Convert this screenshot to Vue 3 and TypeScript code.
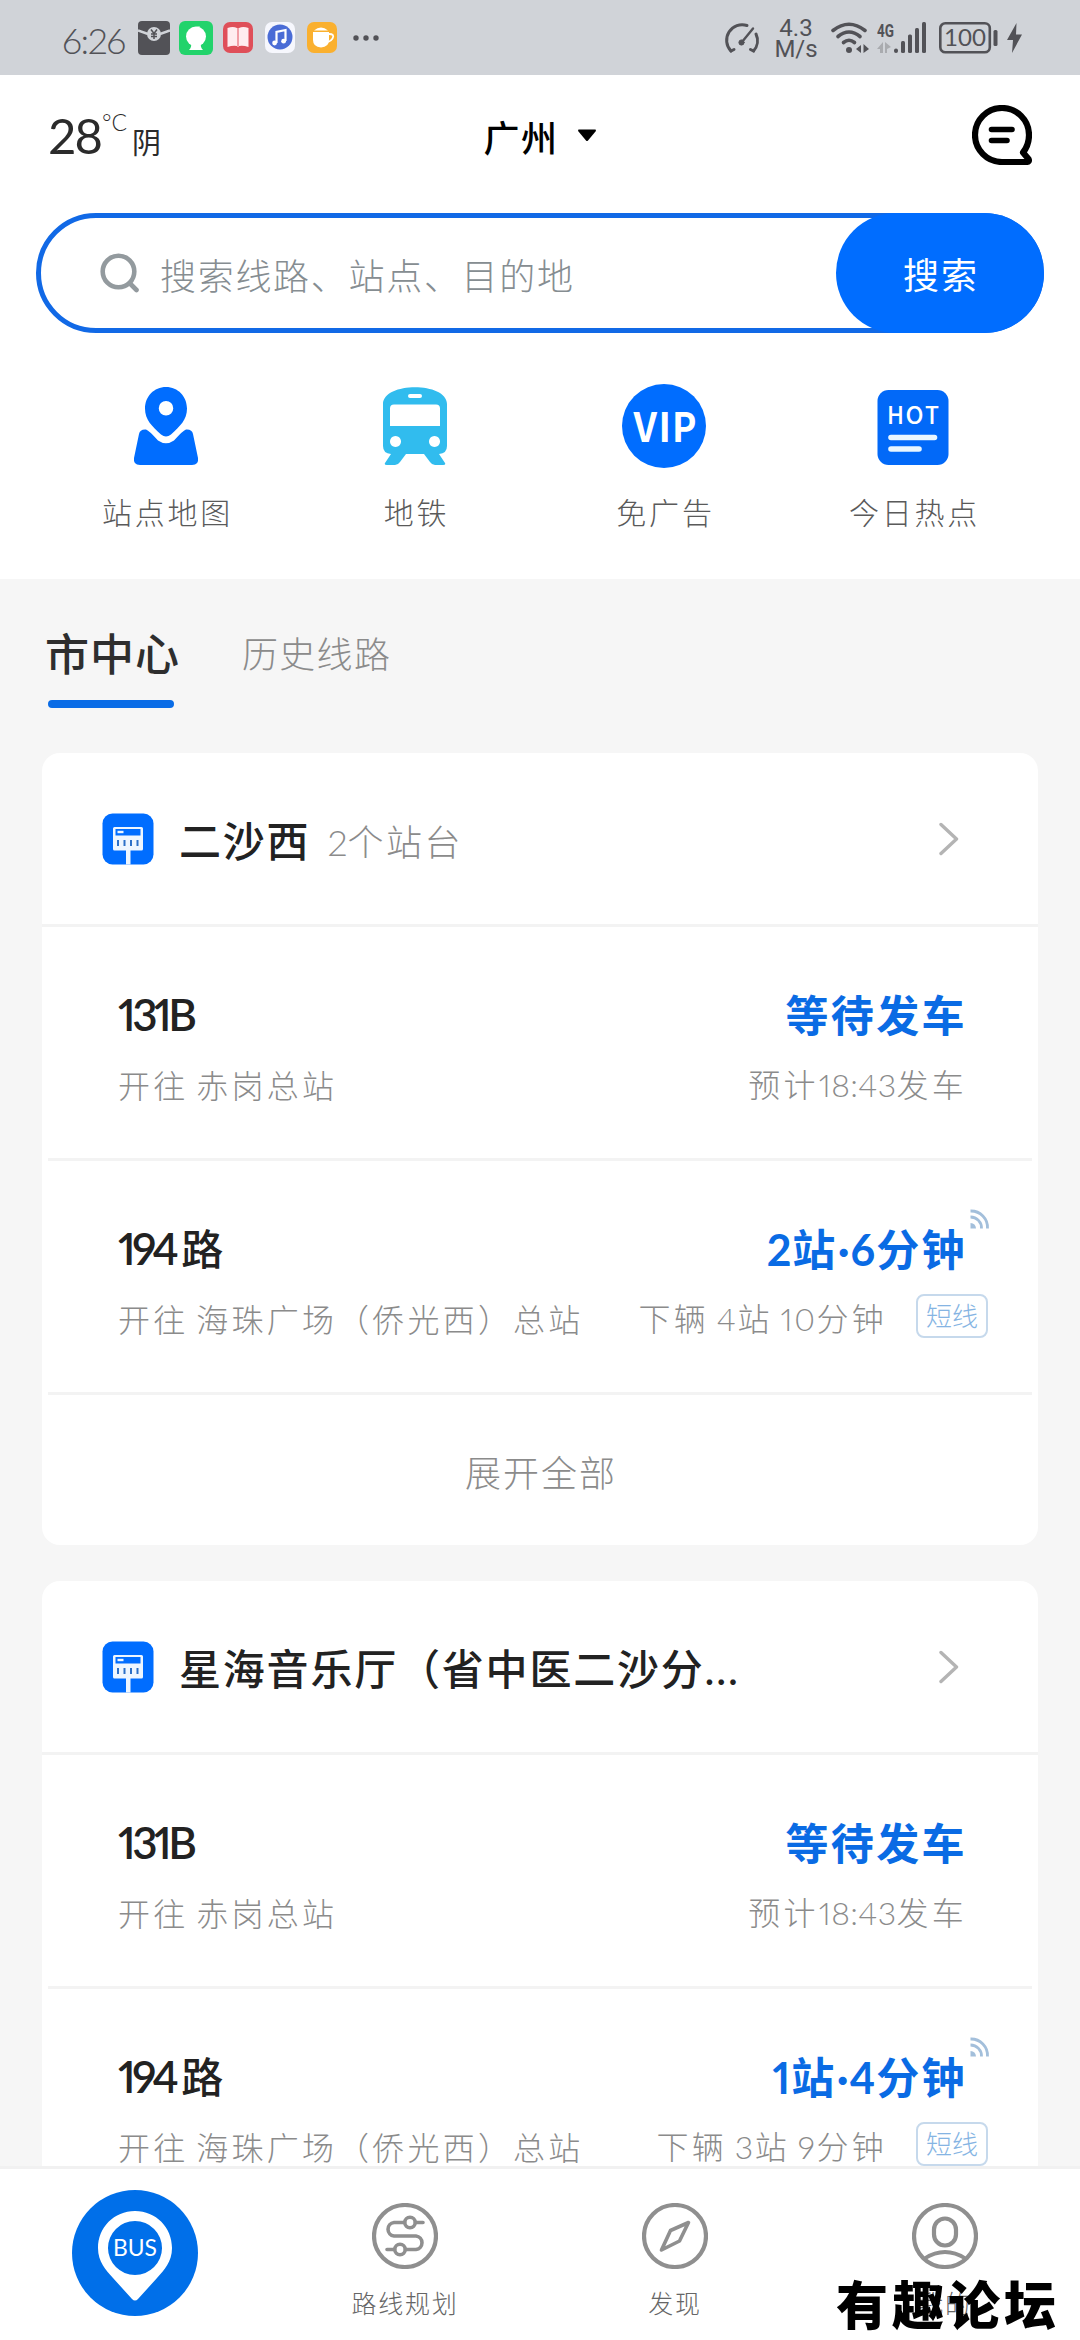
<script setup lang="ts">
import { h, type FunctionalComponent } from 'vue'

interface Line {
  name: string
  dest: string
  eta: string
  note: string
  live: boolean
  tag?: string
}

interface Stop {
  title: string
  count?: string
  lines: Line[]
}

// Splits a label so that latin digits can be spaced more tightly than hanzi.
const Mixed: FunctionalComponent<{ text: string }> = (props) =>
  h(
    'span',
    { class: 'mixed' },
    props.text
      .split(/([0-9A-Z:·.]+)/)
      .filter((part) => part.length > 0)
      .map((part) => (/^[0-9A-Z:·.]/.test(part) ? h('span', { class: 'num' }, part) : part)),
  )
Mixed.props = ['text']

const stops: Stop[] = [
  {
    title: '二沙西',
    count: '2个站台',
    lines: [
      { name: '131B', dest: '开往 赤岗总站', eta: '等待发车', note: '预计18:43发车', live: false },
      { name: '194路', dest: '开往 海珠广场（侨光西）总站', eta: '2站·6分钟', note: '下辆 4站 10分钟', live: true, tag: '短线' },
    ],
  },
  {
    title: '星海音乐厅（省中医二沙分...',
    lines: [
      { name: '131B', dest: '开往 赤岗总站', eta: '等待发车', note: '预计18:43发车', live: false },
      { name: '194路', dest: '开往 海珠广场（侨光西）总站', eta: '1站·4分钟', note: '下辆 3站 9分钟', live: true, tag: '短线' },
    ],
  },
]
</script>

<template>
  <div class="screen">
    <div class="status">
      <div class="time">6:26</div>
      <svg class="s1" width="32" height="34" viewBox="0 0 32 34">
        <rect width="32" height="34" rx="4" fill="#525257" />
        <path d="M0 9.500 L10 13 M32 9.500 L22 13" stroke="#d0d3d8" stroke-width="2.400" fill="none" />
        <circle cx="16" cy="13" r="7" fill="#d0d3d8" />
        <path d="M13 8.500 L16 12.500 L19 8.500 M16 12.500 V18 M13 13 H19 M13 15.500 H19" stroke="#525257" stroke-width="1.500" fill="none" />
      </svg>
      <svg class="s2" width="34" height="34" viewBox="0 0 34 34">
        <rect width="34" height="34" rx="6" fill="#22d36b" />
        <circle cx="17" cy="15.500" r="10" fill="#fff" />
        <path d="M15 8 Q16 5 21 5.500 L18 9 Z M12 22 H22 Q21 26 24 29 H10 Q13 26 12 22 Z" fill="#fff" />
      </svg>
      <svg class="s3" width="30" height="31" viewBox="0 0 30 31">
        <rect width="30" height="31" rx="7" fill="#df4f59" />
        <path d="M4.500 6 Q10 4 14 6 V24 Q10 23 4.500 25 Z" fill="#ffecef" />
        <path d="M25.500 6 Q20 4 16 6 V24 Q20 23 25.500 25 Z" fill="#ffecef" />
        <path d="M15 6 V25" stroke="#f7b9c0" stroke-width="1.500" />
      </svg>
      <svg class="s3" width="30" height="31" viewBox="0 0 30 31">
        <rect width="30" height="31" rx="7" fill="#f6f7fd" />
        <circle cx="15" cy="15" r="12.500" fill="#4a6cd6" />
        <path d="M11.500 21 V10 L20.500 8 V19" stroke="#fff" stroke-width="2.200" fill="none" />
        <circle cx="9.600" cy="21" r="2.400" fill="#fff" />
        <circle cx="18.600" cy="19.200" r="2.400" fill="#fff" />
      </svg>
      <svg class="s5" width="30" height="31" viewBox="0 0 30 31">
        <rect width="30" height="31" rx="7" fill="#fab02f" />
        <path d="M6 10 H22 V18 Q22 25 14 25.500 Q6 25 6 18 Z" fill="#fff" />
        <path d="M7 8.500 Q14 2.500 21 8.500 Z" fill="#fff" />
        <path d="M22 12 Q28 12 25.500 16.500 Q24 19 21 20" stroke="#fff" stroke-width="1.800" fill="none" />
      </svg>
      <svg width="26" height="6" viewBox="0 0 26 6" fill="#525257">
        <circle cx="3" cy="3" r="2.700" /><circle cx="13" cy="3" r="2.700" /><circle cx="23" cy="3" r="2.700" />
      </svg>
      <div class="grow"></div>
      <svg class="gauge" width="36" height="32" viewBox="0 0 36 32" fill="none" stroke="#525257" stroke-width="3" stroke-linecap="round">
        <path d="M7 29 A15.500 15.500 0 0 1 23 3.500" />
        <path d="M32 12 A15.500 15.500 0 0 1 29.500 29" />
        <path d="M7 29 L10 27.500 M29.500 29 L26.500 27.500" />
        <path d="M18 20 L29 6.500" stroke-width="2.400" />
        <circle cx="17.500" cy="20.500" r="2.600" fill="#525257" stroke-width="1" />
      </svg>
      <div class="speed"><span>4.3</span><span>M/s</span></div>
      <svg class="wifi" width="38" height="32" viewBox="0 0 38 32" fill="none" stroke="#525257" stroke-width="3.600" stroke-linecap="round">
        <path d="M2 8.500 Q18 -4 34 8.500" />
        <path d="M7 14.500 Q18 5.500 29 14.500" />
        <path d="M12.500 20.500 Q18 16 23.500 20.500" />
        <circle cx="18" cy="28" r="3" fill="#525257" stroke="none" />
        <path d="M30 23 V31 L25 27 Z M32.500 31 V22 L38 27 Z" fill="#525257" stroke="none" />
      </svg>
      <svg class="signal" width="51" height="32" viewBox="0 0 51 32" fill="#525257">
        <text x="0" y="15" font-size="19" font-weight="700" textLength="17" lengthAdjust="spacingAndGlyphs" font-family="Roboto, sans-serif">4G</text>
        <path d="M6 31 V20 L0 27 H3 V31 Z M8 20 V31 H10 V27 L14 25 Z" fill="#a9abaf" />
        <rect x="17" y="26.500" width="4" height="4.500" rx="2" />
        <rect x="24" y="19" width="4" height="12" rx="1.500" />
        <rect x="31" y="12.500" width="4" height="18.500" rx="1.500" />
        <rect x="38" y="6" width="4" height="25" rx="1.500" />
        <rect x="45" y="0" width="4" height="31" rx="1.500" />
      </svg>
      <svg class="battery" width="60" height="32" viewBox="0 0 60 32">
        <rect x="1.300" y="1.300" width="49.500" height="29" rx="5" fill="none" stroke="#525257" stroke-width="2.600" />
        <rect x="54.500" y="8" width="4" height="16" rx="1.500" fill="#525257" />
        <text x="5" y="24" font-size="23" font-weight="400" textLength="42" lengthAdjust="spacingAndGlyphs" fill="#525257" font-family="Lato, sans-serif">100</text>
      </svg>
      <svg width="15" height="30" viewBox="0 0 15 30"><path d="M9.500 0 L0 17 H6 L5 30 L15 11.500 H9 Z" fill="#525257" /></svg>
    </div>

    <div class="top">
      <header class="header">
        <div class="weather"><span class="deg">28</span><span class="unit">°C</span><span class="sky">阴</span></div>
        <div class="city">
          <span>广州</span>
          <svg width="20" height="13" viewBox="0 0 20 13"><path d="M1.500 0.500 H18.500 Q19.500 1 18.500 2.500 L11 11.500 Q10 12.500 9 11.500 L1.500 2.500 Q0.500 1 1.500 0.500 Z" fill="#000" /></svg>
        </div>
        <svg class="msg" width="60" height="60" viewBox="0 0 60 60" fill="none" stroke="#000" stroke-width="6.200" stroke-linecap="round" stroke-linejoin="round">
          <path d="M30 57 A27 27 0 1 1 57 30 Q57 40 51 47.500 L56.500 54 Q58 57 54 57 Z" />
          <path d="M19.500 24.500 H40 M19.500 35.500 H35" stroke-width="5.600" />
        </svg>
      </header>

      <div class="search">
        <svg width="40" height="40" viewBox="0 0 40 40" fill="none" stroke="#939a9e" stroke-width="4.600" stroke-linecap="round">
          <circle cx="18.500" cy="18.500" r="15.800" /><path d="M30 30.500 L36.500 37" />
        </svg>
        <span class="hint">搜索线路、站点、目的地</span>
        <div class="go">搜索</div>
      </div>

      <div class="shortcuts">
        <div class="cut">
          <svg width="84" height="84" viewBox="0 0 84 84" fill="#006dff">
            <path fill-rule="evenodd" d="M42 3 C54 3 63 12.500 63 24.500 C63 36 56 42 47 50.500 Q42 54.500 37 50.500 C28 42 21 36 21 24.500 C21 12.500 30 3 42 3 Z M42 17 A7.200 7.200 0 1 0 42 31.500 A7.200 7.200 0 1 0 42 17 Z" />
            <path d="M22 45.500 Q24.500 46 34 56.500 Q42 62 50 56.500 Q59.500 46 62 45.500 Q68 45 69 50 L74 74 Q75 81 68 81 H16 Q9 81 10 74 L15 50 Q16 45 22 45.500 Z" />
          </svg>
          <span>站点地图</span>
        </div>
        <div class="cut">
          <svg width="84" height="84" viewBox="0 0 84 84" fill="#31bcee">
            <path fill-rule="evenodd" d="M10 20 C10 -2.500 74 -2.500 74 20 V62 Q74 69.500 66 70 L72 79 Q73 81 70 81 H62 Q59 81 57 78 L51 70 H33 L27 78 Q25 81 22 81 H14 Q11 81 12 79 L18 70 Q10 69.500 10 62 Z M37 10 a2 2 0 0 0 0 4 H47 a2 2 0 0 0 0 -4 Z M21 20.500 Q17 20.500 17 24.500 V42 H67 V24.500 Q67 20.500 63 20.500 Z M22.500 52 a5.500 5.500 0 1 0 0.010 0 Z M61.500 52 a5.500 5.500 0 1 0 0.010 0 Z" />
          </svg>
          <span>地铁</span>
        </div>
        <div class="cut">
          <svg width="84" height="84" viewBox="0 0 84 84">
            <circle cx="42" cy="42" r="42" fill="#006dff" />
            <g fill="#fff" font-size="41" font-weight="700" letter-spacing="0" font-family="'Noto Sans CJK SC', sans-serif">
              <text x="11.500" y="57.500" textLength="23.500" lengthAdjust="spacingAndGlyphs">V</text>
              <text x="36.500" y="57.500" textLength="12.500" lengthAdjust="spacingAndGlyphs">I</text>
              <text x="50" y="57.500" textLength="24.500" lengthAdjust="spacingAndGlyphs">P</text>
            </g>
          </svg>
          <span>免广告</span>
        </div>
        <div class="cut">
          <svg width="84" height="84" viewBox="0 0 84 84">
            <rect x="6.500" y="6" width="71" height="75" rx="11" fill="#0269f8" />
            <g fill="#fff" font-size="24" font-weight="500" letter-spacing="0" font-family="'Noto Sans CJK SC', sans-serif">
              <text x="16" y="40" textLength="17" lengthAdjust="spacingAndGlyphs">H</text>
              <text x="34.500" y="40" textLength="18" lengthAdjust="spacingAndGlyphs">O</text>
              <text x="54" y="40" textLength="14" lengthAdjust="spacingAndGlyphs">T</text>
            </g>
            <path d="M20 53.500 H63.500 M20 65 H48" stroke="#e9f6ff" stroke-width="5.600" stroke-linecap="round" />
          </svg>
          <span>今日热点</span>
        </div>
      </div>
    </div>

    <main class="content">
      <div class="tabs">
        <div class="tab active">市中心</div>
        <div class="tab">历史线路</div>
      </div>

      <section v-for="stop in stops" :key="stop.title" class="card">
        <div class="card-head">
          <svg class="stop-icon" width="52" height="52" viewBox="0 0 52 52">
            <rect x="0.500" y="0.500" width="51" height="51" rx="10" fill="#006dff" />
            <path fill-rule="evenodd" d="M12.500 14 H39.500 Q41 14 41 15.500 V36 Q41 37.500 39.500 37.500 H28.500 V51.500 H24 V37.500 H12.500 Q11 37.500 11 36 V15.500 Q11 14 12.500 14 Z M13.500 16 V22.500 H38.500 V16 Z" fill="#eef6ff" />
            <path d="M15.500 19 H21.500" stroke="#eef6ff" stroke-width="2.400" />
            <path d="M16 27 V33 M22.500 27 V33 M29 27 V33 M35.500 27 V33" stroke="#2d70c8" stroke-width="2" />
          </svg>
          <h2>{{ stop.title }}</h2>
          <Mixed v-if="stop.count" class="count" :text="stop.count" />
          <svg class="chevron" width="20" height="34" viewBox="0 0 20 34"><path d="M2 2.500 L17.500 17 L2 31.500" fill="none" stroke="#b4b4b4" stroke-width="3.400" stroke-linecap="round" stroke-linejoin="round" /></svg>
        </div>

        <div v-for="line in stop.lines" :key="line.name" class="row">
          <div class="left">
            <Mixed class="name" :text="line.name" />
            <Mixed class="sub" :text="line.dest" />
          </div>
          <div class="right">
            <div class="eta">
              <Mixed :text="line.eta" />
              <svg v-if="line.live" class="live" width="20" height="20" viewBox="0 0 20 20" fill="none" stroke="#a3bfdb" stroke-width="2.800">
                <path d="M0.500 2 A16.500 16.500 0 0 1 17.500 19.500 M0.500 8 A11 11 0 0 1 11.500 19.500" />
                <path d="M0.500 14 A6 6 0 0 1 6 19.500 H0.500 Z" fill="#a3bfdb" stroke="none" />
              </svg>
            </div>
            <div class="note" :class="{ tagged: line.tag }">
              <Mixed class="sub" :text="line.note" />
              <span v-if="line.tag" class="tag">{{ line.tag }}</span>
            </div>
          </div>
        </div>

        <div class="more">展开全部</div>
      </section>
    </main>

    <nav class="nav">
      <div class="item home">
        <svg width="126" height="126" viewBox="0 0 126 126">
          <circle cx="63" cy="63" r="63" fill="#006fe9" />
          <path fill-rule="evenodd" d="M63 21 C84 21 100 37.500 100 58 C100 72 92 80 85 88 L66 109 Q63 112 60 109 L41 88 C34 80 26 72 26 58 C26 37.500 42 21 63 21 Z M63 31 A27 27 0 1 0 63 85 A27 27 0 1 0 63 31 Z" fill="#fff" />
          <text x="41" y="66" font-size="23.500" font-weight="400" letter-spacing="0" textLength="44" lengthAdjust="spacingAndGlyphs" fill="#fff" font-family="Lato, sans-serif">BUS</text>
        </svg>
      </div>
      <div class="item">
        <svg width="66" height="66" viewBox="0 0 66 66" fill="none" stroke="#8f8f8f" stroke-width="3.600" stroke-linecap="round">
          <circle cx="33" cy="33" r="31" stroke-width="4.200" />
          <path d="M51 19.500 H43.500 M32.500 19.500 H22 A6.800 6.800 0 0 0 22 33 H44 A6.800 6.800 0 0 1 44 46.500 H33.500 M22.500 46.500 H15" />
          <circle cx="38" cy="19.500" r="5.200" /><circle cx="28" cy="46.500" r="5.200" />
        </svg>
        <span>路线规划</span>
      </div>
      <div class="item">
        <svg width="66" height="66" viewBox="0 0 66 66" fill="none" stroke="#8f8f8f" stroke-width="3.600" stroke-linejoin="round">
          <circle cx="33" cy="33" r="31" stroke-width="4.200" />
          <path d="M46.500 19.500 L28.500 27.500 L19.500 47 L37.500 38 Z" />
        </svg>
        <span>发现</span>
      </div>
      <div class="item">
        <svg width="66" height="66" viewBox="0 0 66 66" fill="none" stroke="#8f8f8f" stroke-width="4.200">
          <circle cx="33" cy="33" r="31" />
          <rect x="22" y="15.500" width="22" height="27" rx="11" />
          <path d="M12.500 55.500 Q33 42.500 53.500 55.500" stroke-width="3.800" />
        </svg>
        <span>我的</span>
      </div>
    </nav>

    <div class="watermark">有趣论坛</div>
  </div>
</template>

<style>
body {
  margin: 0;
}
.num {
  letter-spacing: 0;
  font-feature-settings: 'pnum';
}
</style>

<style scoped>
.screen {
  position: relative;
  display: flex;
  flex-direction: column;
  width: 1080px;
  height: 2340px;
  overflow: hidden;
  background: #f6f6f6;
  font-family: Lato, 'Noto Sans CJK SC', sans-serif;
  font-weight: 300;
  white-space: nowrap;
}
svg {
  display: block;
  flex: none;
}
.status {
  display: flex;
  align-items: center;
  box-sizing: border-box;
  height: 75px;
  padding: 0 58px 0 62px;
  background: #d0d3d8;
  color: #525257;
}
.time {
  width: 76px;
  font-size: 36px;
  letter-spacing: -1.5px;
  padding-top: 4px;
  font-feature-settings: 'pnum';
}
.s1 { margin-right: 9px; }
.s2 { margin-right: 10px; }
.s3 { margin-right: 12px; }
.s5 { margin-right: 16px; }
.grow { flex: 1; }
.gauge { margin-right: 15px; }
.speed {
  display: flex;
  flex-direction: column;
  align-items: center;
  width: 42px;
  margin-right: 14px;
  font: 400 24px/21px Roboto, sans-serif;
  padding-top: 3px;
}
.wifi { margin-right: 8px; }
.signal { margin-right: 11px; }
.battery { margin-right: 8px; }
.top {
  background: #fff;
  padding-bottom: 46px;
}
.header {
  display: grid;
  grid-template-columns: 1fr auto 1fr;
  align-items: center;
  height: 126px;
  padding: 0 48px 0 48px;
}
.weather {
  display: flex;
  margin-top: 10px;
  color: #2b2b2b;
}
.deg {
  width: 54px;
  font-size: 49px;
  line-height: 62px;
  letter-spacing: -2px;
  font-weight: 400;
}
.unit {
  width: 30px;
  font-size: 23px;
  line-height: 37px;
}
.sky {
  font-size: 29px;
  line-height: 78px;
  font-weight: 400;
}
.city {
  display: flex;
  align-items: center;
  gap: 18px;
  font-size: 36px;
  letter-spacing: 1.500px;
  font-weight: 500;
  color: #000;
  line-height: 50px;
}
.city svg { margin-top: -6px; }
.msg { justify-self: end; margin-top: -6px; }
.search {
  display: flex;
  align-items: center;
  box-sizing: border-box;
  height: 120px;
  margin: 12px 36px 0;
  border: 5px solid #1169e6;
  border-radius: 60px;
  padding-left: 59px;
}
.hint {
  flex: 1;
  margin-left: 20px;
  font-size: 36px;
  line-height: 50px;
  letter-spacing: 1.700px;
  color: #868d91;
  padding-top: 6px;
}
.go {
  width: 208px;
  margin: -5px;
  border-radius: 60px;
  background: #006dff;
  color: #fff;
  font-size: 36px;
  font-weight: 400;
  letter-spacing: 2px;
  line-height: 125px;
  height: 120px;
  text-align: center;
  text-indent: 2px;
}
.shortcuts {
  display: grid;
  grid-template-columns: repeat(4, 1fr);
  margin: 51px 42px 0;
}
.cut {
  display: flex;
  flex-direction: column;
  align-items: center;
  gap: 24px;
  font-size: 30px;
  line-height: 40px;
  letter-spacing: 2.800px;
  color: #5a5a5a;
  padding-bottom: 1px;
}
.cut svg { margin-right: 2px; }
.cut span { margin-right: -2px; }
.content {
  flex: 1;
  min-height: 0;
  overflow: hidden;
}
.tabs {
  display: flex;
  gap: 62px;
  height: 129px;
  padding: 45px 45px 0;
}
.tab {
  font-size: 36px;
  line-height: 60px;
  letter-spacing: 1.300px;
  color: #8b8b8b;
}
.tab.active {
  font-size: 44px;
  font-weight: 500;
  color: #2e2e2e;
  letter-spacing: 1px;
}
.tab.active::after {
  content: '';
  display: block;
  width: 126px;
  height: 8px;
  margin: 16px 0 0 3px;
  border-radius: 4px;
  background: #0a6ce6;
}
.card {
  margin: 0 42px 36px;
  border-radius: 18px;
  background: #fff;
}
.card-head {
  display: flex;
  align-items: center;
  height: 171px;
  padding: 0 79px 0 60px;
  border-bottom: 3px solid #f3f3f3;
}
h2 {
  margin: 4px 0 0 25px;
  font-size: 42px;
  line-height: 60px;
  font-weight: 500;
  letter-spacing: 1.800px;
  color: #222;
}
.count {
  margin: 2px 0 0 17px;
  font-size: 36px;
  letter-spacing: 2.500px;
  color: #8b8b8b;
}
.chevron { margin-left: auto; }
.row {
  display: flex;
  justify-content: space-between;
  box-sizing: border-box;
  height: 234px;
  margin: 0 6px;
  padding: 57px 65px 0 70px;
  border-bottom: 3px solid #f3f3f3;
}
.left,
.right {
  display: flex;
  flex-direction: column;
}
.left { gap: 17px; }
.right {
  padding-top: 2px;
  gap: 15px;
  align-items: flex-end;
}
.name {
  font-size: 42px;
  line-height: 60px;
  font-weight: 500;
  letter-spacing: -2px;
  color: #222;
}
.name :deep(.num) {
  font-size: 44px;
  letter-spacing: -3.600px;
  margin-right: 6px;
  font-weight: 600;
}
.sub {
  font-size: 32px;
  line-height: 48px;
  letter-spacing: 3.200px;
  word-spacing: -4px;
  color: #8b8b8b;
}
.eta {
  position: relative;
  font-size: 43px;
  line-height: 60px;
  font-weight: 700;
  letter-spacing: 2.400px;
  color: #0a6be4;
}
.eta :deep(.num) {
  letter-spacing: 1px;
}
.live {
  position: absolute;
  left: 100%;
  top: -11px;
  margin-left: 3px;
}
.note {
  display: flex;
  align-items: flex-start;
}
.note :deep(.num) {
  letter-spacing: 0.400px;
}
.tagged { margin-right: -21px; }
.tagged :deep(.num) { letter-spacing: 1.600px; }
.tag {
  box-sizing: border-box;
  width: 72px;
  height: 44px;
  margin: -1px 0 0 29px;
  border: 2px solid #c6d9ec;
  border-radius: 8px;
  text-align: center;
  font-size: 26px;
  line-height: 40px;
  color: #85b4e3;
}
.more {
  height: 150px;
  line-height: 156px;
  text-align: center;
  font-size: 36px;
  letter-spacing: 2px;
  text-indent: 2px;
  color: #8b8b8b;
}
.nav {
  display: flex;
  box-sizing: border-box;
  height: 174px;
  border-top: 3px solid #f1f1f1;
  background: #fff;
}
.item {
  width: 270px;
  display: flex;
  flex-direction: column;
  align-items: center;
  padding-top: 34px;
  gap: 16px;
  font-size: 25px;
  line-height: 36px;
  letter-spacing: 1.800px;
  color: #666;
}
.home { padding-top: 21px; }
.watermark {
  position: absolute;
  right: 20px;
  bottom: 0;
  font-size: 52px;
  line-height: 70px;
  font-weight: 900;
  letter-spacing: 4px;
  color: #000;
}
</style>
